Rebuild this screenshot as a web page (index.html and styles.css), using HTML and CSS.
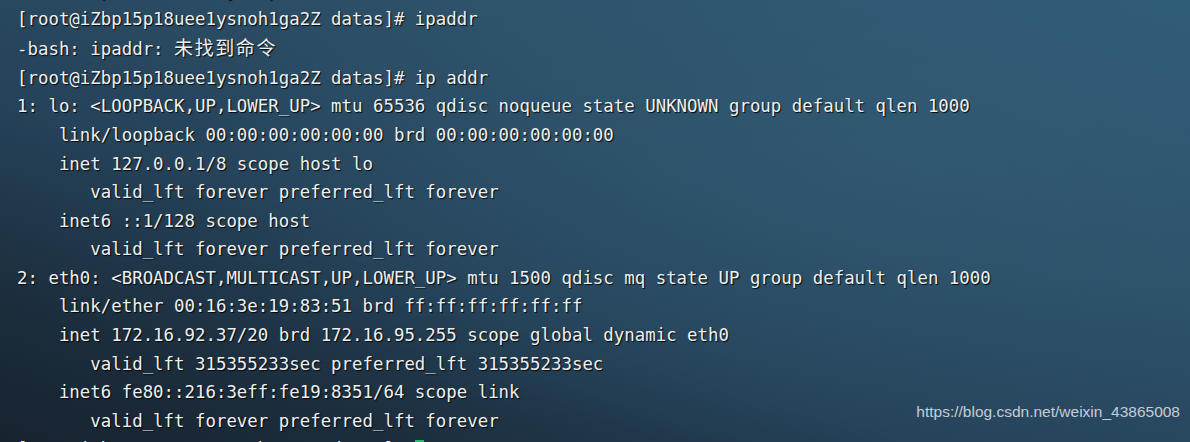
FILE: index.html
```html
<!DOCTYPE html>
<html lang="zh-CN">
<head>
<meta charset="utf-8">
<title>terminal</title>
<link rel="stylesheet" href="styles.css">
</head>
<body>
<div class="term">
<pre class="out"><span class="ln">        p           y   p</span>
<span class="ln">[root@iZbp15p18uee1ysnoh1ga2Z datas]# ipaddr</span>
<span class="ln">-bash: ipaddr: <span class="cjk">未找到命令</span></span>
<span class="ln">[root@iZbp15p18uee1ysnoh1ga2Z datas]# ip addr</span>
<span class="ln">1: lo: &lt;LOOPBACK,UP,LOWER_UP&gt; mtu 65536 qdisc noqueue state UNKNOWN group default qlen 1000</span>
<span class="ln">    link/loopback 00:00:00:00:00:00 brd 00:00:00:00:00:00</span>
<span class="ln">    inet 127.0.0.1/8 scope host lo</span>
<span class="ln">       valid_lft forever preferred_lft forever</span>
<span class="ln">    inet6 ::1/128 scope host</span>
<span class="ln">       valid_lft forever preferred_lft forever</span>
<span class="ln">2: eth0: &lt;BROADCAST,MULTICAST,UP,LOWER_UP&gt; mtu 1500 qdisc mq state UP group default qlen 1000</span>
<span class="ln">    link/ether 00:16:3e:19:83:51 brd ff:ff:ff:ff:ff:ff</span>
<span class="ln">    inet 172.16.92.37/20 brd 172.16.95.255 scope global dynamic eth0</span>
<span class="ln">       valid_lft 315355233sec preferred_lft 315355233sec</span>
<span class="ln">    inet6 fe80::216:3eff:fe19:8351/64 scope link</span>
<span class="ln">       valid_lft forever preferred_lft forever</span>
<span class="ln">[root@iZbp15p18uee1ysnoh1ga2Z datas]# <span class="cursor"> </span></span></pre>
<div class="watermark">https://blog.csdn.net/weixin_43865008</div>
</div>
</body>
</html>
```
FILE: styles.css
```css
html, body {
  margin: 0;
  padding: 0;
  height: 100%;
  overflow: hidden;
}
body {
  background: #1d2e3c;
}
.term {
  position: relative;
  width: 1190px;
  height: 442px;
  overflow: hidden;
  background:
    radial-gradient(ellipse 700px 300px at 75% 35%, rgba(52, 94, 120, 0.55), rgba(52, 94, 120, 0) 100%),
    linear-gradient(200deg, #2f5c77 0%, #2d5169 30%, #25435a 60%, #1b2c3b 85%, #18232f 100%);
}
.out {
  margin: -23.8px 0 0 0;
  padding: 0 0 0 17px;
  font-family: "DejaVu Sans Mono", "Liberation Mono", "Noto Sans CJK SC", monospace;
  font-size: 17.4px;
  line-height: 28.57px;
  color: #eef0f0;
  text-shadow: 1px 1px 1px rgba(0, 0, 0, 0.9);
  white-space: pre;
}
.cjk {
  font-family: "Noto Sans CJK SC", sans-serif;
  font-size: 19px;
  letter-spacing: 1.6px;
}
.cursor {
  display: inline-block;
  width: 9px;
  height: 20px;
  background: #18c46a;
  vertical-align: middle;
  text-shadow: none;
}
.watermark {
  position: absolute;
  right: 10px;
  top: 403px;
  font-family: "Liberation Sans", Arial, sans-serif;
  font-size: 15.5px;
  color: rgba(225, 230, 235, 0.85);
}
```
